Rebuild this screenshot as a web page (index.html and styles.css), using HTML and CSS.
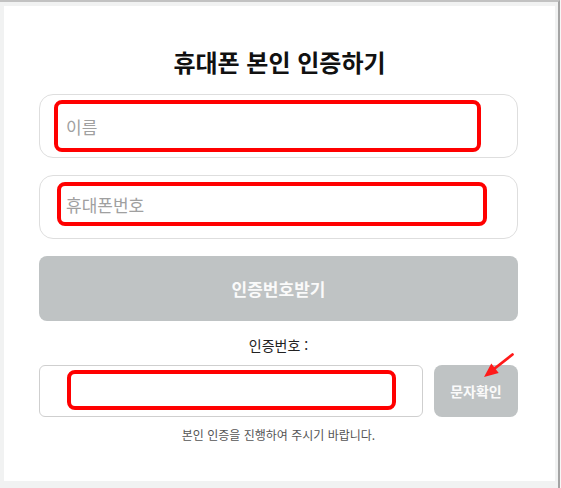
FILE: index.html
```html
<!DOCTYPE html>
<html lang="ko">
<head>
    <meta charset="UTF-8">
    <meta name="viewport" content="width=device-width, initial-scale=1.0">
    <title>휴대폰 본인 인증</title>
    <link rel="stylesheet" href="styles.css">
</head>
<body>

    <div class="window">
        <div class="card">
            <h1>휴대폰 본인 인증하기</h1>

            <div class="form">
                <!-- 이름 / 휴대폰번호 -->
                <div class="field">
                    <div class="mark mark-name">
                        <input type="text" id="userName" placeholder="이름">
                    </div>
                </div>
                <div class="field">
                    <div class="mark mark-phone">
                        <input type="tel" id="userPhone" placeholder="휴대폰번호">
                    </div>
                </div>

                <button class="send-button" onclick="sendCode()">인증번호받기</button>

                <div class="code-label">인증번호 :</div>

                <div class="code-row">
                    <div class="code-field">
                        <div class="mark mark-code">
                            <input type="text" id="authCode">
                        </div>
                    </div>
                    <button class="check-button">문자확인</button>

                    <!-- 안내 화살표 -->
                    <svg class="arrow" width="36" height="28" viewBox="0 0 36 28">
                        <path d="M32.5 2.5 L14 17" stroke="#ff1a1a" stroke-width="2.8" stroke-linecap="round"/>
                        <polygon points="4,25 18.7,21 11.3,11.6" fill="#ff1a1a"/>
                    </svg>
                </div>

                <p class="notice">본인 인증을 진행하여 주시기 바랍니다.</p>
            </div>
        </div>
    </div>

    <script>
        function sendCode() {
            const phone = document.getElementById("userPhone").value;
            if (!phone) {
                alert("휴대폰번호를 입력해 주세요.");
            }
        }
    </script>

</body>
</html>
```

FILE: styles.css
```css
/* Basic styling */
body {
    margin: 0;
    background-color: #f7f7f7;
    font-family: "Noto Sans CJK KR", "Noto Sans", sans-serif;
    color: #222;
}
.window {
    width: 560px;
    height: 488px;
    box-sizing: border-box;
    background-color: #f1f2f2;
    border-top: 2px solid #c2c2c2;
    border-right: 2px solid #a4a4a4;
    padding: 4px 0 0 4px;
}
.card {
    width: 551px;
    height: 475px;
    box-sizing: border-box;
    background: #ffffff;
    padding-top: 40px;
}
h1 {
    margin: 0;
    text-align: center;
    font-size: 24px;
    line-height: 32px;
    font-weight: bold;
    color: #111;
}
.form {
    width: 479px;
    margin: 16px 0 0 35px;
}
.field {
    height: 64px;
    box-sizing: border-box;
    border: 1px solid #dedede;
    border-radius: 14px;
    margin-bottom: 17px;
    display: flex;
}
/* red annotation boxes */
.mark {
    border: 4px solid #ff0000;
    border-radius: 8px;
    display: flex;
    align-items: center;
    box-sizing: border-box;
}
.mark-name {
    flex: 1;
    margin: 5px 36px 5px 14px;
}
.mark-phone {
    flex: 1;
    margin: 6px 30px 12px 17px;
}
.mark-code {
    flex: 1;
    margin: 4px 26px 6px 27px;
}
input {
    width: 100%;
    border: none;
    outline: none;
    background: transparent;
    font-family: inherit;
    font-size: 17px;
    color: #333;
    padding: 0 0 0 8px;
}
input::placeholder {
    color: #a0a0a0;
}
.mark-phone input {
    padding-left: 5px;
}
.send-button {
    display: block;
    width: 100%;
    height: 65px;
    border: none;
    border-radius: 8px;
    background-color: #bfc3c4;
    color: #fafafa;
    font-family: inherit;
    font-size: 17px;
    font-weight: bold;
    cursor: pointer;
}
.code-label {
    text-align: center;
    font-size: 14px;
    line-height: 20px;
    margin-top: 14px;
    color: #222;
}
.code-row {
    position: relative;
    display: flex;
    gap: 11px;
    margin-top: 10px;
    height: 52px;
}
.code-field {
    width: 384px;
    box-sizing: border-box;
    border: 1px solid #cfcfcf;
    border-radius: 6px;
    display: flex;
}
.check-button {
    flex: 1;
    border: none;
    border-radius: 8px;
    background-color: #bfc3c4;
    color: #fafafa;
    font-family: inherit;
    font-size: 14px;
    font-weight: bold;
    cursor: pointer;
}
.arrow {
    position: absolute;
    left: 441px;
    top: -13px;
}
.notice {
    margin: 10px 0 0;
    text-align: center;
    font-size: 12px;
    line-height: 16px;
    color: #555;
}
```
